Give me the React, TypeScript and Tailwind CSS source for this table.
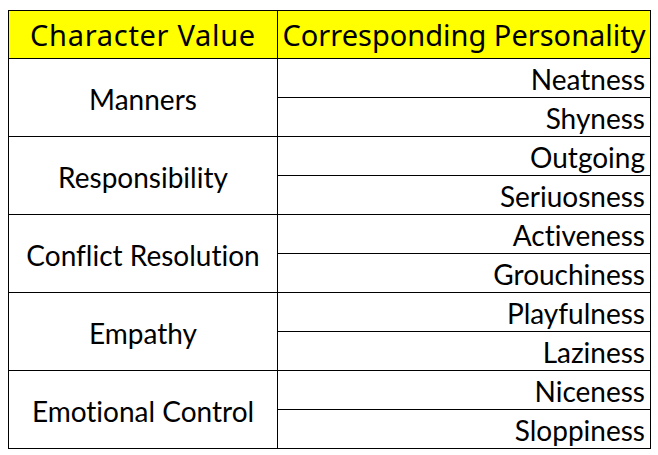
import React from "react";

const groups: [string, string, string][] = [
  ["Manners", "Neatness", "Shyness"],
  ["Responsibility", "Outgoing", "Seriuosness"],
  ["Conflict Resolution", "Activeness", "Grouchiness"],
  ["Empathy", "Playfulness", "Laziness"],
  ["Emotional Control", "Niceness", "Sloppiness"],
];

const body = { fontFamily: "Lato, 'Open Sans', sans-serif" };
const head = { fontFamily: "'Noto Sans', 'Open Sans', sans-serif" };

export default function App() {
  return (
    <div className="w-[658px] h-[455px] bg-white pt-[10px] pl-[8px] [font-variant-ligatures:none]">
      <div className="w-[643px] border border-black text-black">
        <div className="flex h-[48px] bg-[#ffff00] border-b border-black" style={head}>
          <div className="w-[269px] border-r border-black flex items-center justify-center text-[29px] tracking-[0.7px] leading-none">
            Character Value
          </div>
          <div className="flex-1 flex items-center justify-center text-[29px] leading-none whitespace-nowrap">
            Corresponding Personality
          </div>
        </div>
        {groups.map(([v, a, b], i) => (
          <div key={v} className={"flex " + (i < groups.length - 1 ? "border-b border-black" : "")} style={body}>
            <div className="w-[269px] border-r border-black flex items-center justify-center text-[28px] h-[77px] leading-none pt-[2px]">
              {v}
            </div>
            <div className="flex-1 flex flex-col">
              <div className="h-[39px] border-b border-black flex items-center justify-end pr-[5px] pt-[2px] text-[28px] leading-none">
                {a}
              </div>
              <div className="h-[38px] flex items-center justify-end pr-[5px] pt-[2px] text-[28px] leading-none">
                {b}
              </div>
            </div>
          </div>
        ))}
      </div>
    </div>
  );
}
